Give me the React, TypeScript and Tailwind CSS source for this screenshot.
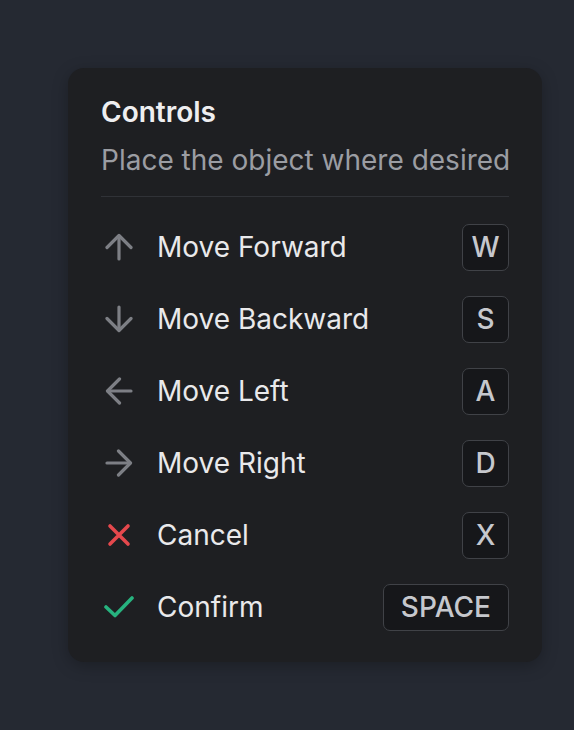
import React from "react";

const Arrow = ({ dir }: { dir: "up" | "down" | "left" | "right" }) => {
  const rot = { up: 0, down: 180, left: 270, right: 90 }[dir];
  return (
    <svg width="28" height="28" viewBox="0 0 28 28" fill="none" stroke="#7d7f85" strokeWidth="3.2" strokeLinecap="round" strokeLinejoin="round" style={{ transform: `rotate(${rot}deg)` }}>
      <path d="M14 3v23" />
      <path d="M2 14.5 14 2.5l12 12" />
    </svg>
  );
};

const XIcon = () => (
  <svg width="28" height="28" viewBox="0 0 28 28" fill="none" stroke="#e5484d" strokeWidth="3.6" strokeLinecap="round">
    <path d="M5 5l18 18M23 5 5 23" />
  </svg>
);

const CheckIcon = () => (
  <svg width="30" height="28" viewBox="0 0 30 28" fill="none" stroke="#27b37f" strokeWidth="3.6" strokeLinecap="round" strokeLinejoin="round">
    <path d="M2 14l9 8.5L28 5" />
  </svg>
);

const rows: { icon: React.ReactNode; label: string; key: string }[] = [
  { icon: <Arrow dir="up" />, label: "Move Forward", key: "W" },
  { icon: <Arrow dir="down" />, label: "Move Backward", key: "S" },
  { icon: <Arrow dir="left" />, label: "Move Left", key: "A" },
  { icon: <Arrow dir="right" />, label: "Move Right", key: "D" },
  { icon: <XIcon />, label: "Cancel", key: "X" },
  { icon: <CheckIcon />, label: "Confirm", key: "SPACE" },
];

export default function App() {
  return (
    <div className="min-h-[730px] w-full bg-[#252932] pt-[68px] pl-[68px]" style={{ fontFamily: "Inter, 'Noto Sans', sans-serif" }}>
      <div className="w-[474px] rounded-2xl bg-[#1e1f22] px-[33px] pt-[26px] pb-[19px] shadow-[0_4px_16px_rgba(0,0,0,0.25)]">
        <h1 className="text-[28px] leading-[36px] font-semibold text-[#eeeef0]">Controls</h1>
        <p className="mt-[10px] whitespace-nowrap text-[28px] leading-[40px] text-[#9b9da3]">Place the object where desired</p>
        <div className="mt-[16px] h-px bg-[#303237]" />
        <div className="mt-[14px] flex flex-col">
          {rows.map((r) => (
            <div key={r.label} className="flex h-[72px] items-center">
              <div className="flex w-[36px] justify-center">{r.icon}</div>
              <span className="ml-[20px] flex-1 text-[28px] text-[#e9e9eb]">{r.label}</span>
              <div
                className={
                  r.key.length > 1
                    ? "flex h-[47px] items-center justify-center rounded-[7px] border-[1.5px] border-[#404247] bg-[#16171a] px-[17px] text-[28px] font-medium text-[#c6c8cd]"
                    : "flex h-[47px] w-[47px] items-center justify-center rounded-[7px] border-[1.5px] border-[#404247] bg-[#16171a] text-[28px] font-medium text-[#c6c8cd]"
                }
              >
                {r.key}
              </div>
            </div>
          ))}
        </div>
      </div>
    </div>
  );
}
